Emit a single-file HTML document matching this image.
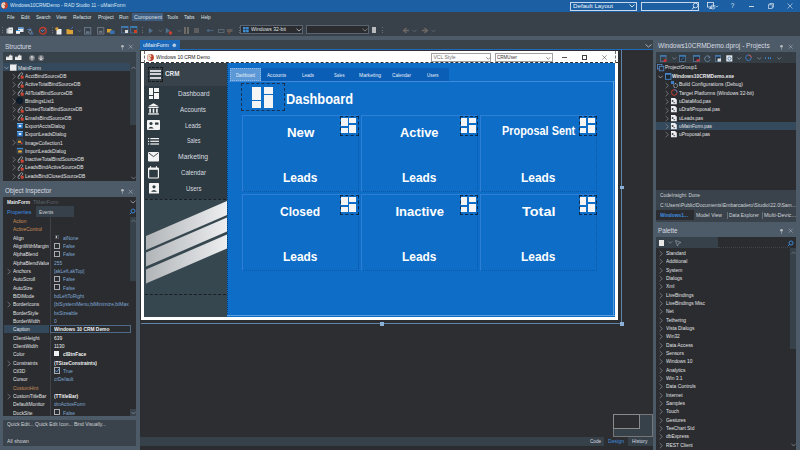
<!DOCTYPE html>
<html><head><meta charset="utf-8">
<style>
*{margin:0;padding:0;box-sizing:border-box}
html,body{width:800px;height:450px;overflow:hidden;background:#2b2c30;font-family:"Liberation Sans",sans-serif}
.a{position:absolute}
.t{position:absolute;white-space:nowrap;line-height:1}
svg{overflow:visible}
</style></head><body>
<div class="a" style="left:0px;top:0px;width:800px;height:11.6px;background:#1c5fa2;"></div>
<div class="a" style="left:0px;top:11.6px;width:800px;height:24.6px;background:#38414a;"></div>
<div class="a" style="left:0px;top:36px;width:800px;height:4px;background:#4d5a67;"></div>
<div class="a" style="left:0px;top:36px;width:140px;height:414px;background:#4d5a67;"></div>
<div class="a" style="left:3px;top:52px;width:133px;height:129px;background:#2b2c30;"></div>
<div class="a" style="left:3px;top:52px;width:133px;height:11px;background:#38424a;"></div>
<div class="a" style="left:3px;top:197px;width:133px;height:219px;background:#2b2c30;"></div>
<div class="a" style="left:3px;top:419.5px;width:133px;height:26.5px;background:#3a434c;"></div>
<div class="a" style="left:140px;top:40px;width:513px;height:9px;background:#3a424a;"></div>
<div class="a" style="left:140px;top:49px;width:513px;height:1px;background:#1e6bc0;"></div>
<div class="a" style="left:140px;top:50px;width:513px;height:387px;background:#2d2e32;"></div>
<div class="a" style="left:140px;top:436.6px;width:513px;height:9.3px;background:#37414a;"></div>
<div class="a" style="left:653px;top:36px;width:147px;height:414px;background:#4d5a67;"></div>
<div class="a" style="left:656px;top:52px;width:140px;height:138px;background:#2b2c30;"></div>
<div class="a" style="left:656px;top:190px;width:140px;height:32px;background:#3a434c;"></div>
<div class="a" style="left:656px;top:237px;width:140px;height:213px;background:#2b2c30;"></div>
<svg class="a" style="left:0.6px;top:1.5px" width="8" height="8"><circle cx="3.5" cy="3.5" r="3.4" fill="#c0402c"/><path d="M0.3 3.5 A3.2 3.2 0 0 1 3.5 0.3 L4.6 2.4 L3 3.4 L4.2 5 L2.6 6.6 A3.2 3.2 0 0 1 0.3 3.5Z" fill="#eadcd2"/><circle cx="2.6" cy="2.2" r="0.8" fill="#d8a050"/></svg>
<span class="t" style="left:9.50px;top:3.03px;font-size:5.4px;color:#dce8f4;transform:scaleX(0.912);transform-origin:0 0;">Windows10CRMDemo - RAD Studio 11 - uMainForm</span>
<div class="a" style="left:570px;top:1.5px;width:67px;height:9px;border:1px solid #c8d8ea;"></div>
<span class="t" style="left:573.00px;top:3.69px;font-size:5.8px;color:#eef3f8;transform:scaleX(1.070);transform-origin:0 0;">Default Layout</span>
<svg class="a" style="left:629px;top:3px" width="6" height="5"><path d="M0.5 1.5 L3 4 L5.5 1.5" stroke="#e8eef6" stroke-width="0.9" fill="none"/></svg>
<div class="a" style="left:641px;top:1.5px;width:58px;height:9px;border:1px solid #c8d8ea;"></div>
<svg class="a" style="left:691px;top:2px" width="8" height="8"><circle cx="4.5" cy="3.5" r="2.3" stroke="#e8eef6" stroke-width="0.8" fill="none"/><path d="M3 5 L1 7.5" stroke="#e8eef6" stroke-width="0.9"/></svg>
<svg class="a" style="left:707px;top:2px" width="12" height="9"><rect x="0.5" y="0.5" width="6" height="4.5" stroke="#e0e8f2" stroke-width="0.8" fill="none"/><path d="M2 6.5 H5 M3.5 5 V6.5" stroke="#e0e8f2" stroke-width="0.7"/><circle cx="6" cy="5" r="2" fill="none" stroke="#e0e8f2" stroke-width="0.7"/><path d="M8.8 3.8 l1.2 1.2 l1.2 -1.2" stroke="#e0e8f2" stroke-width="0.6" fill="none"/></svg>
<span class="t" style="left:730.72px;top:3.18px;font-size:6.4px;color:#dfe8f2;">?</span>
<div class="a" style="left:748.5px;top:5.6px;width:5px;height:0.6px;background:#c8d6e4;"></div>
<svg class="a" style="left:767.5px;top:3px" width="8" height="8"><rect x="0.5" y="1.8" width="3.7" height="3.7" stroke="#d8e2ee" stroke-width="0.7" fill="none"/><path d="M1.8 1.8 V0.5 H5.5 V4.2 H4.2" stroke="#d8e2ee" stroke-width="0.7" fill="none"/></svg>
<svg class="a" style="left:786.5px;top:3px" width="8" height="8"><path d="M0.5 0.5 L5.5 5.5 M5.5 0.5 L0.5 5.5" stroke="#d8e2ee" stroke-width="0.6"/></svg>
<div class="a" style="left:132px;top:13px;width:31px;height:8px;background:#3e5d80;"></div>
<span class="t" style="left:7.00px;top:15.46px;font-size:5.6px;color:#dfe3e8;transform:scaleX(0.832);transform-origin:0 0;">File</span>
<span class="t" style="left:20.50px;top:15.46px;font-size:5.6px;color:#dfe3e8;transform:scaleX(0.902);transform-origin:0 0;">Edit</span>
<span class="t" style="left:35.50px;top:15.46px;font-size:5.6px;color:#dfe3e8;transform:scaleX(0.818);transform-origin:0 0;">Search</span>
<span class="t" style="left:56.00px;top:15.46px;font-size:5.6px;color:#dfe3e8;transform:scaleX(0.889);transform-origin:0 0;">View</span>
<span class="t" style="left:73.00px;top:15.46px;font-size:5.6px;color:#dfe3e8;transform:scaleX(0.875);transform-origin:0 0;">Refactor</span>
<span class="t" style="left:97.50px;top:15.46px;font-size:5.6px;color:#dfe3e8;transform:scaleX(0.901);transform-origin:0 0;">Project</span>
<span class="t" style="left:118.75px;top:15.46px;font-size:5.6px;color:#dfe3e8;transform:scaleX(0.925);transform-origin:0 0;">Run</span>
<span class="t" style="left:134.00px;top:15.46px;font-size:5.6px;color:#dfe3e8;transform:scaleX(0.968);transform-origin:0 0;">Component</span>
<span class="t" style="left:167.00px;top:15.46px;font-size:5.6px;color:#dfe3e8;transform:scaleX(0.842);transform-origin:0 0;">Tools</span>
<span class="t" style="left:184.00px;top:15.46px;font-size:5.6px;color:#dfe3e8;transform:scaleX(0.888);transform-origin:0 0;">Tabs</span>
<span class="t" style="left:201.00px;top:15.46px;font-size:5.6px;color:#dfe3e8;transform:scaleX(0.847);transform-origin:0 0;">Help</span>
<div class="a" style="left:2px;top:27px;width:1px;height:1px;background:#6a7078;"></div>
<div class="a" style="left:2px;top:29.5px;width:1px;height:1px;background:#6a7078;"></div>
<div class="a" style="left:2px;top:32px;width:1px;height:1px;background:#6a7078;"></div>
<div class="a" style="left:51.5px;top:27px;width:1px;height:1px;background:#6a7078;"></div>
<div class="a" style="left:51.5px;top:29.5px;width:1px;height:1px;background:#6a7078;"></div>
<div class="a" style="left:51.5px;top:32px;width:1px;height:1px;background:#6a7078;"></div>
<div class="a" style="left:141.5px;top:27px;width:1px;height:1px;background:#6a7078;"></div>
<div class="a" style="left:141.5px;top:29.5px;width:1px;height:1px;background:#6a7078;"></div>
<div class="a" style="left:141.5px;top:32px;width:1px;height:1px;background:#6a7078;"></div>
<div class="a" style="left:238.5px;top:27px;width:1px;height:1px;background:#6a7078;"></div>
<div class="a" style="left:238.5px;top:29.5px;width:1px;height:1px;background:#6a7078;"></div>
<div class="a" style="left:238.5px;top:32px;width:1px;height:1px;background:#6a7078;"></div>
<div class="a" style="left:382px;top:27px;width:1px;height:1px;background:#6a7078;"></div>
<div class="a" style="left:382px;top:29.5px;width:1px;height:1px;background:#6a7078;"></div>
<div class="a" style="left:382px;top:32px;width:1px;height:1px;background:#6a7078;"></div>
<svg class="a" style="left:6px;top:26.5px" width="8" height="7"><rect x="0.5" y="1.5" width="4" height="5" fill="#b8bcc0"/><rect x="2.5" y="0.5" width="4.5" height="6" fill="#e8eaec"/><rect x="3.5" y="2" width="2.5" height="0.6" fill="#909498"/></svg>
<svg class="a" style="left:16px;top:26.5px" width="8" height="7"><rect x="2" y="0.5" width="5.5" height="4.5" fill="#e8eaec"/><rect x="2" y="0.5" width="5.5" height="1.3" fill="#3d8fd8"/><rect x="0" y="3" width="4" height="3.8" fill="#f4f4f4"/><rect x="0" y="3" width="4" height="1" fill="#3d8fd8"/></svg>
<svg class="a" style="left:26px;top:26.5px" width="8" height="8"><path d="M1 2.5 H5 M3.5 1 L5.2 2.5 L3.5 4" stroke="#4a80c0" stroke-width="0.9" fill="none"/><circle cx="4.2" cy="4.8" r="1.6" stroke="#8a9098" stroke-width="0.8" fill="none"/><path d="M6.8 5.5 V7 H4" stroke="#4a80c0" stroke-width="0.9" fill="none"/></svg>
<svg class="a" style="left:39px;top:26.5px" width="8" height="8"><circle cx="3.8" cy="3.8" r="3.3" fill="none" stroke="#c83a2a" stroke-width="1.3"/><path d="M2 3 L3.8 4.5 L5.6 2.5" stroke="#5a90c8" stroke-width="1" fill="none"/></svg>
<svg class="a" style="left:55px;top:26.5px" width="7" height="8"><rect x="1.5" y="2" width="5" height="5.5" fill="#eceef0"/><path d="M0 1 L3 0 L3.5 2.5 L1 3.5Z" fill="#e0a030"/></svg>
<svg class="a" style="left:66px;top:26.5px" width="8" height="8"><rect x="0.5" y="3" width="6.5" height="4.2" fill="#dca238"/><rect x="0.5" y="2.2" width="3" height="1.2" fill="#dca238"/><path d="M5 2 L7 0" stroke="#4a80c0" stroke-width="0.8"/></svg>
<svg class="a" style="left:84px;top:26.5px" width="8" height="8"><rect x="0.6" y="0.6" width="6.2" height="6.4" fill="none" stroke="#6a7a8a" stroke-width="1"/><rect x="2" y="4.3" width="3.4" height="1.8" fill="#6a7a8a"/></svg>
<svg class="a" style="left:97px;top:26.5px" width="8" height="8"><rect x="0.6" y="0.6" width="6.2" height="6.4" fill="none" stroke="#6a7480" stroke-width="1"/><rect x="2" y="3.8" width="3.4" height="2" fill="#707880"/></svg>
<svg class="a" style="left:107px;top:26.5px" width="8" height="8"><rect x="0" y="2" width="4.5" height="3.5" fill="#d8a030"/><rect x="3" y="3.5" width="4.5" height="3.5" fill="#3a70b0"/></svg>
<svg class="a" style="left:120.5px;top:26.3px" width="8" height="8"><rect x="0.5" y="0.5" width="6.5" height="6.5" fill="none" stroke="#4a6a90" stroke-width="0.9"/><rect x="0.5" y="0.5" width="6.5" height="1.2" fill="#3d8fd8"/><rect x="4" y="4" width="3" height="3" fill="#d8dce0"/></svg>
<svg class="a" style="left:130px;top:26.3px" width="8" height="8"><rect x="0.5" y="0.5" width="6.5" height="6.5" fill="none" stroke="#4a6a90" stroke-width="0.9"/><rect x="0.5" y="0.5" width="6.5" height="1.2" fill="#3d8fd8"/><rect x="4" y="4" width="3" height="3" fill="#d04020"/></svg>
<svg class="a" style="left:147.5px;top:26.5px" width="8" height="8"><path d="M0.8 0.8 L5 3.7 L0.8 6.6Z" fill="#50708e"/></svg>
<svg class="a" style="left:165px;top:26.5px" width="8" height="8"><path d="M0.8 0.8 L5 3.7 L0.8 6.6Z" fill="#50708e"/><path d="M3.5 6 L5.5 3.8 L7.5 6 L5.5 8Z" fill="#d04030"/></svg>
<svg class="a" style="left:157.5px;top:28.5px" width="5" height="4"><path d="M0.5 0.8 L2.5 2.8 L4.5 0.8" stroke="#6a7078" stroke-width="0.7" fill="none"/></svg>
<svg class="a" style="left:176.5px;top:28.5px" width="5" height="4"><path d="M0.5 0.8 L2.5 2.8 L4.5 0.8" stroke="#6a7078" stroke-width="0.7" fill="none"/></svg>
<svg class="a" style="left:77px;top:28.5px" width="5" height="4"><path d="M0.5 0.8 L2.5 2.8 L4.5 0.8" stroke="#6a7078" stroke-width="0.7" fill="none"/></svg>
<div class="a" style="left:184px;top:27px;width:1.8px;height:6.5px;background:#6e6a66;"></div>
<div class="a" style="left:187.2px;top:27px;width:1.8px;height:6.5px;background:#6e6a66;"></div>
<div class="a" style="left:194px;top:27.5px;width:5px;height:5.5px;background:#5e5e5e;"></div>
<svg class="a" style="left:207px;top:27.5px" width="7" height="6"><rect x="0" y="1.5" width="3" height="2" fill="#4a6a88"/><path d="M3.5 2.5 H6.5" stroke="#4a6a88" stroke-width="0.9"/></svg>
<svg class="a" style="left:217.5px;top:27.5px" width="7" height="6"><rect x="0.5" y="1.5" width="5.5" height="3" fill="none" stroke="#5a6a78" stroke-width="0.9"/></svg>
<svg class="a" style="left:227px;top:27.5px" width="7" height="6"><rect x="0" y="1" width="5.5" height="3" fill="#605a58"/><rect x="1" y="4.5" width="2" height="1" fill="#a05030"/></svg>
<div class="a" style="left:240px;top:25px;width:62.5px;height:9.25px;background:#2b2c30;border:1px solid #5a6470;"></div>
<svg class="a" style="left:243px;top:27px" width="6" height="6"><rect x="0" y="0" width="2.6" height="2.4" fill="#3f8fd8"/><rect x="3.1" y="0" width="2.6" height="2.4" fill="#3f8fd8"/><rect x="0" y="2.9" width="2.6" height="2.4" fill="#3f8fd8"/><rect x="3.1" y="2.9" width="2.6" height="2.4" fill="#3f8fd8"/></svg>
<span class="t" style="left:250.50px;top:26.86px;font-size:5.6px;color:#dfe3e8;transform:scaleX(0.915);transform-origin:0 0;">Windows 32-bit</span>
<svg class="a" style="left:295.5px;top:28px" width="6" height="4"><path d="M0.5 0.8 L3 3 L5.5 0.8" stroke="#c8ccd0" stroke-width="0.8" fill="none"/></svg>
<div class="a" style="left:306.25px;top:25px;width:62.5px;height:9.25px;background:#2b2c30;border:1px solid #5a6470;"></div>
<svg class="a" style="left:362px;top:28px" width="6" height="4"><path d="M0.5 0.8 L3 3 L5.5 0.8" stroke="#8a9098" stroke-width="0.8" fill="none"/></svg>
<div class="a" style="left:371.5px;top:27px;width:4.5px;height:6px;background:#d8d8d8;opacity:0.8"></div>
<svg class="a" style="left:402px;top:26.5px" width="8" height="7"><path d="M7 3.5 H2 M4.5 1 L1.5 3.5 L4.5 6" stroke="#6e6864" stroke-width="1.3" fill="none"/></svg>
<svg class="a" style="left:420.5px;top:26.5px" width="8" height="7"><path d="M1 3.5 H6 M3.5 1 L6.5 3.5 L3.5 6" stroke="#6e6864" stroke-width="1.3" fill="none"/></svg>
<svg class="a" style="left:411.5px;top:28.5px" width="5" height="4"><path d="M0.5 0.8 L2.5 2.8 L4.5 0.8" stroke="#6a7078" stroke-width="0.7" fill="none"/></svg>
<svg class="a" style="left:430.5px;top:28.5px" width="5" height="4"><path d="M0.5 0.8 L2.5 2.8 L4.5 0.8" stroke="#6a7078" stroke-width="0.7" fill="none"/></svg>
<span class="t" style="left:5.00px;top:43.84px;font-size:6.8px;color:#d8dde2;transform:scaleX(0.957);transform-origin:0 0;">Structure</span>
<svg class="a" style="left:119.5px;top:43.5px" width="5" height="7"><circle cx="2.5" cy="2.2" r="1.3" fill="#b8bcc0"/><path d="M2.5 3.3 V6" stroke="#b8bcc0" stroke-width="0.5"/></svg>
<svg class="a" style="left:127.5px;top:44px" width="6" height="6"><path d="M0.8 0.8 L4.6 4.6 M4.6 0.8 L0.8 4.6" stroke="#b8bcc0" stroke-width="0.55"/></svg>
<svg class="a" style="left:5.6px;top:54px" width="7" height="7"><path d="M0 3 H2.5 Q4.5 3 4.5 1 V0.5" stroke="#e0e0e0" stroke-width="0.7" fill="none"/><rect x="0" y="3.2" width="6.5" height="2.8" fill="#eeeeee"/><rect x="3" y="1.5" width="3.5" height="2" fill="#eeeeee"/></svg>
<svg class="a" style="left:15px;top:54px" width="7" height="7"><path d="M0 3 H2.5 Q4.5 3 4.5 1 V0.5" stroke="#e0e0e0" stroke-width="0.7" fill="none"/><rect x="0" y="3.2" width="6.5" height="2.8" fill="#eeeeee"/><rect x="3" y="1.5" width="3.5" height="2" fill="#eeeeee"/></svg>
<svg class="a" style="left:28.5px;top:54.5px" width="6" height="6"><circle cx="3" cy="3" r="3" fill="#767a80"/><path d="M3 1.3 V4.8 M1.6 2.7 L3 1.3 L4.4 2.7" stroke="#f0f0f0" stroke-width="0.9" fill="none"/></svg>
<svg class="a" style="left:38px;top:54.5px" width="6" height="6"><circle cx="3" cy="3" r="3" fill="#767a80"/><path d="M3 1.3 V4.8 M1.6 3.4 L3 4.8 L4.4 3.4" stroke="#f0f0f0" stroke-width="0.9" fill="none"/></svg>
<div class="a" style="left:3px;top:63px;width:126.5px;height:8.3px;background:#35495c;"></div>
<svg class="a" style="left:4px;top:65.5px" width="5" height="4"><path d="M0.5 0.8 L2.5 3 L4.5 0.8" stroke="#a8b0b8" stroke-width="0.7" fill="none"/></svg>
<svg class="a" style="left:10px;top:64px" width="7" height="7"><rect x="0" y="0" width="6.5" height="6.7" fill="#eceef0"/><rect x="0" y="0" width="6.5" height="1" fill="#9aa0a8"/></svg>
<span class="t" style="left:18.00px;top:65.56px;font-size:5.6px;color:#e0e2e4;transform:scaleX(0.913);transform-origin:0 0;">MainForm</span>
<svg class="a" style="left:11.5px;top:73.80px" width="5" height="6"><path d="M0.6 0 L3.4 2.6 L0.6 5.2" stroke="#8e9296" stroke-width="0.65" fill="none"/></svg>
<svg class="a" style="left:16.5px;top:72.39999999999999px" width="7" height="7"><path d="M1.2 4.2 L3.6 1.2 Q4.6 0.2 5.4 1 Q6.1 1.8 5.2 2.8 L3.8 4.4" stroke="#a8acb0" stroke-width="0.8" fill="none"/><path d="M3 2.6 L1.2 4.8 Q0.6 5.8 1.4 6.3 Q2.2 6.8 2.9 6" stroke="#a8acb0" stroke-width="0.8" fill="none"/><rect x="3.8" y="3.8" width="2.9" height="2.9" fill="#cc4430"/></svg>
<span class="t" style="left:25.00px;top:73.86px;font-size:5.6px;color:#e0e2e4;transform:scaleX(0.870);transform-origin:0 0;">AcctBindSourceDB</span>
<svg class="a" style="left:11.5px;top:82.13px" width="5" height="6"><path d="M0.6 0 L3.4 2.6 L0.6 5.2" stroke="#8e9296" stroke-width="0.65" fill="none"/></svg>
<svg class="a" style="left:16.5px;top:80.72999999999999px" width="7" height="7"><path d="M1.2 4.2 L3.6 1.2 Q4.6 0.2 5.4 1 Q6.1 1.8 5.2 2.8 L3.8 4.4" stroke="#a8acb0" stroke-width="0.8" fill="none"/><path d="M3 2.6 L1.2 4.8 Q0.6 5.8 1.4 6.3 Q2.2 6.8 2.9 6" stroke="#a8acb0" stroke-width="0.8" fill="none"/><rect x="3.8" y="3.8" width="2.9" height="2.9" fill="#cc4430"/></svg>
<span class="t" style="left:25.00px;top:82.19px;font-size:5.6px;color:#e0e2e4;transform:scaleX(0.870);transform-origin:0 0;">ActiveTotalBindSourceDB</span>
<svg class="a" style="left:11.5px;top:90.46px" width="5" height="6"><path d="M0.6 0 L3.4 2.6 L0.6 5.2" stroke="#8e9296" stroke-width="0.65" fill="none"/></svg>
<svg class="a" style="left:16.5px;top:89.05999999999999px" width="7" height="7"><path d="M1.2 4.2 L3.6 1.2 Q4.6 0.2 5.4 1 Q6.1 1.8 5.2 2.8 L3.8 4.4" stroke="#a8acb0" stroke-width="0.8" fill="none"/><path d="M3 2.6 L1.2 4.8 Q0.6 5.8 1.4 6.3 Q2.2 6.8 2.9 6" stroke="#a8acb0" stroke-width="0.8" fill="none"/><rect x="3.8" y="3.8" width="2.9" height="2.9" fill="#cc4430"/></svg>
<span class="t" style="left:25.00px;top:90.52px;font-size:5.6px;color:#e0e2e4;transform:scaleX(0.870);transform-origin:0 0;">AllTotalBindSourceDB</span>
<svg class="a" style="left:11.5px;top:98.79px" width="5" height="6"><path d="M0.6 0 L3.4 2.6 L0.6 5.2" stroke="#8e9296" stroke-width="0.65" fill="none"/></svg>
<div class="a" style="left:16px;top:96.99000000000001px;width:7.2px;height:7.2px;background:#0d1b2a;border-radius:50%;"></div>
<span class="t" style="left:25.00px;top:98.85px;font-size:5.6px;color:#e0e2e4;transform:scaleX(0.870);transform-origin:0 0;">BindingsList1</span>
<svg class="a" style="left:11.5px;top:107.12px" width="5" height="6"><path d="M0.6 0 L3.4 2.6 L0.6 5.2" stroke="#8e9296" stroke-width="0.65" fill="none"/></svg>
<svg class="a" style="left:16.5px;top:105.71999999999998px" width="7" height="7"><path d="M1.2 4.2 L3.6 1.2 Q4.6 0.2 5.4 1 Q6.1 1.8 5.2 2.8 L3.8 4.4" stroke="#a8acb0" stroke-width="0.8" fill="none"/><path d="M3 2.6 L1.2 4.8 Q0.6 5.8 1.4 6.3 Q2.2 6.8 2.9 6" stroke="#a8acb0" stroke-width="0.8" fill="none"/><rect x="3.8" y="3.8" width="2.9" height="2.9" fill="#cc4430"/></svg>
<span class="t" style="left:25.00px;top:107.18px;font-size:5.6px;color:#e0e2e4;transform:scaleX(0.870);transform-origin:0 0;">ClosedTotalBindSourceDB</span>
<svg class="a" style="left:11.5px;top:115.45px" width="5" height="6"><path d="M0.6 0 L3.4 2.6 L0.6 5.2" stroke="#8e9296" stroke-width="0.65" fill="none"/></svg>
<svg class="a" style="left:16.5px;top:114.05px" width="7" height="7"><path d="M1.2 4.2 L3.6 1.2 Q4.6 0.2 5.4 1 Q6.1 1.8 5.2 2.8 L3.8 4.4" stroke="#a8acb0" stroke-width="0.8" fill="none"/><path d="M3 2.6 L1.2 4.8 Q0.6 5.8 1.4 6.3 Q2.2 6.8 2.9 6" stroke="#a8acb0" stroke-width="0.8" fill="none"/><rect x="3.8" y="3.8" width="2.9" height="2.9" fill="#cc4430"/></svg>
<span class="t" style="left:25.00px;top:115.51px;font-size:5.6px;color:#e0e2e4;transform:scaleX(0.870);transform-origin:0 0;">EmailsBindSourceDB</span>
<svg class="a" style="left:17px;top:122.67999999999999px" width="6" height="6"><rect x="0" y="0" width="6" height="5.6" fill="#2f78c8" stroke="#203850" stroke-width="0.4"/><rect x="0" y="0" width="6" height="1" fill="#7ab4ec"/><ellipse cx="3" cy="3" rx="1.5" ry="1" fill="#f4f8fc"/></svg>
<span class="t" style="left:25.00px;top:123.84px;font-size:5.6px;color:#e0e2e4;transform:scaleX(0.870);transform-origin:0 0;">ExportAcctsDialog</span>
<svg class="a" style="left:17px;top:131.01px" width="6" height="6"><rect x="0" y="0" width="6" height="5.6" fill="#2f78c8" stroke="#203850" stroke-width="0.4"/><rect x="0" y="0" width="6" height="1" fill="#7ab4ec"/><ellipse cx="3" cy="3" rx="1.5" ry="1" fill="#f4f8fc"/></svg>
<span class="t" style="left:25.00px;top:132.17px;font-size:5.6px;color:#e0e2e4;transform:scaleX(0.870);transform-origin:0 0;">ExportLeadsDialog</span>
<svg class="a" style="left:11.5px;top:140.44px" width="5" height="6"><path d="M0.6 0 L3.4 2.6 L0.6 5.2" stroke="#8e9296" stroke-width="0.65" fill="none"/></svg>
<svg class="a" style="left:17px;top:139.44px" width="6" height="6"><rect x="0" y="0" width="6" height="5.5" fill="#2a3440" stroke="#4a5868" stroke-width="0.5"/><rect x="1" y="1.8" width="3" height="2" fill="#e0a030"/><circle cx="4.6" cy="4.2" r="0.9" fill="#d03a2a"/></svg>
<span class="t" style="left:25.00px;top:140.50px;font-size:5.6px;color:#e0e2e4;transform:scaleX(0.870);transform-origin:0 0;">ImageCollection1</span>
<svg class="a" style="left:17px;top:147.76999999999998px" width="6" height="6"><rect x="0" y="0" width="6" height="5.5" fill="#2a3440" stroke="#4a5868" stroke-width="0.5"/><rect x="0" y="0" width="6" height="1.2" fill="#3a8ad8"/><rect x="1.2" y="2.4" width="3.6" height="2.2" fill="#e8a838"/></svg>
<span class="t" style="left:25.00px;top:148.83px;font-size:5.6px;color:#e0e2e4;transform:scaleX(0.870);transform-origin:0 0;">ImportLeadsDialog</span>
<svg class="a" style="left:11.5px;top:157.10px" width="5" height="6"><path d="M0.6 0 L3.4 2.6 L0.6 5.2" stroke="#8e9296" stroke-width="0.65" fill="none"/></svg>
<svg class="a" style="left:16.5px;top:155.7px" width="7" height="7"><path d="M1.2 4.2 L3.6 1.2 Q4.6 0.2 5.4 1 Q6.1 1.8 5.2 2.8 L3.8 4.4" stroke="#a8acb0" stroke-width="0.8" fill="none"/><path d="M3 2.6 L1.2 4.8 Q0.6 5.8 1.4 6.3 Q2.2 6.8 2.9 6" stroke="#a8acb0" stroke-width="0.8" fill="none"/><rect x="3.8" y="3.8" width="2.9" height="2.9" fill="#cc4430"/></svg>
<span class="t" style="left:25.00px;top:157.16px;font-size:5.6px;color:#e0e2e4;transform:scaleX(0.870);transform-origin:0 0;">InactiveTotalBindSourceDB</span>
<svg class="a" style="left:11.5px;top:165.43px" width="5" height="6"><path d="M0.6 0 L3.4 2.6 L0.6 5.2" stroke="#8e9296" stroke-width="0.65" fill="none"/></svg>
<svg class="a" style="left:16.5px;top:164.03px" width="7" height="7"><path d="M1.2 4.2 L3.6 1.2 Q4.6 0.2 5.4 1 Q6.1 1.8 5.2 2.8 L3.8 4.4" stroke="#a8acb0" stroke-width="0.8" fill="none"/><path d="M3 2.6 L1.2 4.8 Q0.6 5.8 1.4 6.3 Q2.2 6.8 2.9 6" stroke="#a8acb0" stroke-width="0.8" fill="none"/><rect x="3.8" y="3.8" width="2.9" height="2.9" fill="#cc4430"/></svg>
<span class="t" style="left:25.00px;top:165.49px;font-size:5.6px;color:#e0e2e4;transform:scaleX(0.870);transform-origin:0 0;">LeadsBindActiveSourceDB</span>
<svg class="a" style="left:11.5px;top:173.76px" width="5" height="6"><path d="M0.6 0 L3.4 2.6 L0.6 5.2" stroke="#8e9296" stroke-width="0.65" fill="none"/></svg>
<svg class="a" style="left:16.5px;top:172.36px" width="7" height="7"><path d="M1.2 4.2 L3.6 1.2 Q4.6 0.2 5.4 1 Q6.1 1.8 5.2 2.8 L3.8 4.4" stroke="#a8acb0" stroke-width="0.8" fill="none"/><path d="M3 2.6 L1.2 4.8 Q0.6 5.8 1.4 6.3 Q2.2 6.8 2.9 6" stroke="#a8acb0" stroke-width="0.8" fill="none"/><rect x="3.8" y="3.8" width="2.9" height="2.9" fill="#cc4430"/></svg>
<span class="t" style="left:25.00px;top:173.82px;font-size:5.6px;color:#e0e2e4;transform:scaleX(0.870);transform-origin:0 0;">LeadsBindClosedSourceDB</span>
<div class="a" style="left:129.5px;top:63px;width:6.5px;height:61.5px;background:#37414a;"></div>
<svg class="a" style="left:131px;top:65.5px" width="5" height="4"><path d="M0.5 3 L2.5 0.8 L4.5 3" stroke="#8890a0" stroke-width="0.7" fill="none"/></svg>
<svg class="a" style="left:131px;top:176px" width="5" height="4"><path d="M0.5 0.8 L2.5 3 L4.5 0.8" stroke="#8890a0" stroke-width="0.7" fill="none"/></svg>
<span class="t" style="left:5.00px;top:188.44px;font-size:6.8px;color:#d8dde2;transform:scaleX(0.939);transform-origin:0 0;">Object Inspector</span>
<svg class="a" style="left:119.5px;top:188px" width="5" height="7"><circle cx="2.5" cy="2.2" r="1.3" fill="#b8bcc0"/><path d="M2.5 3.3 V6" stroke="#b8bcc0" stroke-width="0.5"/></svg>
<svg class="a" style="left:127.5px;top:188.5px" width="6" height="6"><path d="M0.8 0.8 L4.6 4.6 M4.6 0.8 L0.8 4.6" stroke="#b8bcc0" stroke-width="0.55"/></svg>
<span class="t" style="left:7.00px;top:199.86px;font-size:5.6px;color:#e8eaec;font-weight:bold;transform:scaleX(0.860);transform-origin:0 0;">MainForm</span>
<span class="t" style="left:32.50px;top:199.86px;font-size:5.6px;color:#5e646c;transform:scaleX(0.892);transform-origin:0 0;">TMainForm</span>
<svg class="a" style="left:129.5px;top:200px" width="6" height="4"><path d="M0.5 0.8 L3 3 L5.5 0.8" stroke="#a8b0b8" stroke-width="0.8" fill="none"/></svg>
<div class="a" style="left:3px;top:206.25px;width:133px;height:10.25px;background:#2b2c30;"></div>
<div class="a" style="left:36px;top:206.25px;width:38px;height:10.25px;background:#37414b;"></div>
<span class="t" style="left:7.00px;top:209.86px;font-size:5.6px;color:#3d8ee0;transform:scaleX(0.961);transform-origin:0 0;">Properties</span>
<span class="t" style="left:39.00px;top:209.86px;font-size:5.6px;color:#d0d4d8;transform:scaleX(0.847);transform-origin:0 0;">Events</span>
<svg class="a" style="left:128.5px;top:208px" width="7" height="7"><circle cx="4" cy="3" r="2" stroke="#3d8ee0" stroke-width="0.9" fill="none"/><path d="M2.6 4.4 L0.8 6.2" stroke="#3d8ee0" stroke-width="1"/></svg>
<span class="t" style="left:13.10px;top:218.91px;font-size:5.6px;color:#c98e58;transform:scaleX(0.870);transform-origin:0 0;">Action</span>
<span class="t" style="left:13.10px;top:227.24px;font-size:5.6px;color:#c98e58;transform:scaleX(0.870);transform-origin:0 0;">ActiveControl</span>
<span class="t" style="left:13.10px;top:235.57px;font-size:5.6px;color:#e0e2e4;transform:scaleX(0.870);transform-origin:0 0;">Align</span>
<span class="t" style="left:13.10px;top:243.90px;font-size:5.6px;color:#e0e2e4;transform:scaleX(0.870);transform-origin:0 0;">AlignWithMargins</span>
<span class="t" style="left:13.10px;top:252.23px;font-size:5.6px;color:#e0e2e4;transform:scaleX(0.870);transform-origin:0 0;">AlphaBlend</span>
<span class="t" style="left:13.10px;top:260.56px;font-size:5.6px;color:#e0e2e4;transform:scaleX(0.870);transform-origin:0 0;">AlphaBlendValue</span>
<svg class="a" style="left:6.5px;top:268.93px" width="5" height="6"><path d="M0.6 0 L3.4 2.6 L0.6 5.2" stroke="#8e9296" stroke-width="0.65" fill="none"/></svg>
<span class="t" style="left:13.10px;top:268.89px;font-size:5.6px;color:#e0e2e4;transform:scaleX(0.870);transform-origin:0 0;">Anchors</span>
<span class="t" style="left:13.10px;top:277.22px;font-size:5.6px;color:#e0e2e4;transform:scaleX(0.870);transform-origin:0 0;">AutoScroll</span>
<span class="t" style="left:13.10px;top:285.55px;font-size:5.6px;color:#e0e2e4;transform:scaleX(0.870);transform-origin:0 0;">AutoSize</span>
<span class="t" style="left:13.10px;top:293.88px;font-size:5.6px;color:#e0e2e4;transform:scaleX(0.870);transform-origin:0 0;">BiDiMode</span>
<svg class="a" style="left:6.5px;top:302.25px" width="5" height="6"><path d="M0.6 0 L3.4 2.6 L0.6 5.2" stroke="#8e9296" stroke-width="0.65" fill="none"/></svg>
<span class="t" style="left:13.10px;top:302.21px;font-size:5.6px;color:#e0e2e4;transform:scaleX(0.870);transform-origin:0 0;">BorderIcons</span>
<span class="t" style="left:13.10px;top:310.54px;font-size:5.6px;color:#e0e2e4;transform:scaleX(0.870);transform-origin:0 0;">BorderStyle</span>
<span class="t" style="left:13.10px;top:318.87px;font-size:5.6px;color:#e0e2e4;transform:scaleX(0.870);transform-origin:0 0;">BorderWidth</span>
<div class="a" style="left:3.5px;top:324.84000000000003px;width:46px;height:8.4px;background:#35495c;"></div>
<span class="t" style="left:13.10px;top:327.20px;font-size:5.6px;color:#e0e2e4;transform:scaleX(0.870);transform-origin:0 0;">Caption</span>
<span class="t" style="left:13.10px;top:335.53px;font-size:5.6px;color:#e0e2e4;transform:scaleX(0.870);transform-origin:0 0;">ClientHeight</span>
<span class="t" style="left:13.10px;top:343.86px;font-size:5.6px;color:#e0e2e4;transform:scaleX(0.870);transform-origin:0 0;">ClientWidth</span>
<span class="t" style="left:13.10px;top:352.19px;font-size:5.6px;color:#e0e2e4;transform:scaleX(0.870);transform-origin:0 0;">Color</span>
<svg class="a" style="left:6.5px;top:360.56px" width="5" height="6"><path d="M0.6 0 L3.4 2.6 L0.6 5.2" stroke="#8e9296" stroke-width="0.65" fill="none"/></svg>
<span class="t" style="left:13.10px;top:360.52px;font-size:5.6px;color:#e0e2e4;transform:scaleX(0.870);transform-origin:0 0;">Constraints</span>
<span class="t" style="left:13.10px;top:368.85px;font-size:5.6px;color:#e0e2e4;transform:scaleX(0.870);transform-origin:0 0;">Ctl3D</span>
<span class="t" style="left:13.10px;top:377.18px;font-size:5.6px;color:#e0e2e4;transform:scaleX(0.870);transform-origin:0 0;">Cursor</span>
<span class="t" style="left:13.10px;top:385.51px;font-size:5.6px;color:#c98e58;transform:scaleX(0.870);transform-origin:0 0;">CustomHint</span>
<svg class="a" style="left:6.5px;top:393.88px" width="5" height="6"><path d="M0.6 0 L3.4 2.6 L0.6 5.2" stroke="#8e9296" stroke-width="0.65" fill="none"/></svg>
<span class="t" style="left:13.10px;top:393.84px;font-size:5.6px;color:#e0e2e4;transform:scaleX(0.870);transform-origin:0 0;">CustomTitleBar</span>
<span class="t" style="left:13.10px;top:402.17px;font-size:5.6px;color:#e0e2e4;transform:scaleX(0.870);transform-origin:0 0;">DefaultMonitor</span>
<span class="t" style="left:13.10px;top:410.50px;font-size:5.6px;color:#e0e2e4;transform:scaleX(0.870);transform-origin:0 0;">DockSite</span>
<div class="a" style="left:49px;top:216.5px;width:5px;height:199.5px;background:#2b2c30;"></div>
<div class="a" style="left:49.5px;top:216.5px;width:0.8px;height:199.5px;background:#3e4246;"></div>
<div class="a" style="left:54.5px;top:234.91px;width:4px;height:4px;border:0.5px solid #505458;"></div>
<div class="a" style="left:55.8px;top:236.21px;width:1.5px;height:1.5px;background:#c8ccd0;"></div>
<span class="t" style="left:62.50px;top:235.57px;font-size:5.6px;color:#7fa8d4;transform:scaleX(0.870);transform-origin:0 0;">alNone</span>
<div class="a" style="left:54.2px;top:242.54000000000002px;width:6.3px;height:6.3px;border:0.8px solid #a8acb0;"></div>
<span class="t" style="left:62.50px;top:243.90px;font-size:5.6px;color:#7fa8d4;transform:scaleX(0.870);transform-origin:0 0;">False</span>
<div class="a" style="left:54.2px;top:250.87px;width:6.3px;height:6.3px;border:0.8px solid #a8acb0;"></div>
<span class="t" style="left:62.50px;top:252.23px;font-size:5.6px;color:#7fa8d4;transform:scaleX(0.870);transform-origin:0 0;">False</span>
<span class="t" style="left:54.20px;top:260.56px;font-size:5.6px;color:#7fa8d4;transform:scaleX(0.870);transform-origin:0 0;">255</span>
<span class="t" style="left:54.20px;top:268.89px;font-size:5.6px;color:#7fa8d4;transform:scaleX(0.870);transform-origin:0 0;">[akLeft,akTop]</span>
<div class="a" style="left:54.2px;top:275.86px;width:6.3px;height:6.3px;border:0.8px solid #a8acb0;"></div>
<span class="t" style="left:62.50px;top:277.22px;font-size:5.6px;color:#7fa8d4;transform:scaleX(0.870);transform-origin:0 0;">False</span>
<div class="a" style="left:54.2px;top:284.19px;width:6.3px;height:6.3px;border:0.8px solid #a8acb0;"></div>
<span class="t" style="left:62.50px;top:285.55px;font-size:5.6px;color:#7fa8d4;transform:scaleX(0.870);transform-origin:0 0;">False</span>
<span class="t" style="left:54.20px;top:293.88px;font-size:5.6px;color:#7fa8d4;transform:scaleX(0.870);transform-origin:0 0;">bdLeftToRight</span>
<span class="t" style="left:54.20px;top:302.21px;font-size:5.6px;color:#7fa8d4;transform:scaleX(0.901);transform-origin:0 0;">[biSystemMenu,biMinimize,biMax</span>
<span class="t" style="left:54.20px;top:310.54px;font-size:5.6px;color:#7fa8d4;transform:scaleX(0.870);transform-origin:0 0;">bsSizeable</span>
<span class="t" style="left:54.20px;top:318.87px;font-size:5.6px;color:#7fa8d4;transform:scaleX(0.870);transform-origin:0 0;">0</span>
<div class="a" style="left:50px;top:324.84000000000003px;width:80.5px;height:8.4px;background:#2b2c30;border:0.8px solid #4f6a86;"></div>
<span class="t" style="left:54.20px;top:327.20px;font-size:5.6px;color:#eef0f2;font-weight:bold;transform:scaleX(0.870);transform-origin:0 0;">Windows 10 CRM Demo</span>
<span class="t" style="left:54.20px;top:335.53px;font-size:5.6px;color:#eef0f2;transform:scaleX(0.870);transform-origin:0 0;">639</span>
<span class="t" style="left:54.20px;top:343.86px;font-size:5.6px;color:#eef0f2;transform:scaleX(0.870);transform-origin:0 0;">1130</span>
<div class="a" style="left:54.2px;top:351.22999999999996px;width:5px;height:5px;background:#f0f0f0;"></div>
<span class="t" style="left:62.50px;top:352.19px;font-size:5.6px;color:#eef0f2;font-weight:bold;transform:scaleX(0.870);transform-origin:0 0;">clBtnFace</span>
<span class="t" style="left:54.20px;top:360.52px;font-size:5.6px;color:#eef0f2;font-weight:bold;transform:scaleX(0.870);transform-origin:0 0;">(TSizeConstraints)</span>
<div class="a" style="left:54.2px;top:367.49px;width:6.3px;height:6.3px;border:0.8px solid #a8acb0;"></div>
<svg class="a" style="left:54.2px;top:367.49px" width="7" height="7"><path d="M1 3.2 L2.6 5 L5.8 1" stroke="#5aa0e8" stroke-width="0.9" fill="none"/></svg>
<span class="t" style="left:62.50px;top:368.85px;font-size:5.6px;color:#7fa8d4;transform:scaleX(0.870);transform-origin:0 0;">True</span>
<span class="t" style="left:54.20px;top:377.18px;font-size:5.6px;color:#7fa8d4;transform:scaleX(0.870);transform-origin:0 0;">crDefault</span>
<span class="t" style="left:54.20px;top:393.84px;font-size:5.6px;color:#eef0f2;font-weight:bold;transform:scaleX(0.870);transform-origin:0 0;">(TTitleBar)</span>
<span class="t" style="left:54.20px;top:402.17px;font-size:5.6px;color:#7fa8d4;transform:scaleX(0.870);transform-origin:0 0;">dmActiveForm</span>
<div class="a" style="left:54.2px;top:409.14000000000004px;width:6.3px;height:6.3px;border:0.8px solid #a8acb0;"></div>
<span class="t" style="left:62.50px;top:410.50px;font-size:5.6px;color:#7fa8d4;transform:scaleX(0.870);transform-origin:0 0;">False</span>
<div class="a" style="left:129.8px;top:217.3px;width:6.7px;height:63.3px;background:#37414a;"></div>
<svg class="a" style="left:131px;top:218.5px" width="5" height="4"><path d="M0.5 3 L2.5 0.8 L4.5 3" stroke="#7a8088" stroke-width="0.7" fill="none"/></svg>
<div class="a" style="left:130px;top:409px;width:6px;height:7px;background:#3a434c;"></div>
<svg class="a" style="left:131px;top:411px" width="5" height="4"><path d="M0.5 0.8 L2.5 3 L4.5 0.8" stroke="#8890a0" stroke-width="0.7" fill="none"/></svg>
<span class="t" style="left:6.50px;top:421.76px;font-size:5.6px;color:#d0d4d8;transform:scaleX(0.886);transform-origin:0 0;">Quick Edit...   Quick Edit Icon...   Bind Visually...</span>
<span class="t" style="left:6.50px;top:439.26px;font-size:5.6px;color:#d0d4d8;transform:scaleX(0.918);transform-origin:0 0;">All shown</span>
<div class="a" style="left:140px;top:40px;width:39.75px;height:8.75px;background:#1c68b8;"></div>
<span class="t" style="left:143.20px;top:41.92px;font-size:6px;color:#f2f6fa;transform:scaleX(0.847);transform-origin:0 0;">uMainForm</span>
<svg class="a" style="left:172.2px;top:42.5px" width="5" height="5"><circle cx="2.3" cy="2.3" r="1.5" fill="#a8c4e0" stroke="#dce8f4" stroke-width="0.5"/></svg>
<svg class="a" style="left:645px;top:43.5px" width="7" height="4"><path d="M0.5 0.5 L3.5 3 L6.5 0.5" stroke="#c8ccd0" stroke-width="0.8" fill="none"/></svg>
<div class="a" style="left:621px;top:50px;width:1px;height:273.5px;background:#5f84aa;"></div>
<div class="a" style="left:141px;top:323px;width:481px;height:1px;background:#5f84aa;"></div>
<div class="a" style="left:620px;top:321.5px;width:4px;height:4px;background:#8ab0d8;"></div>
<div class="a" style="left:379.75px;top:322px;width:3.75px;height:4px;background:#8ab0d8;"></div>
<div class="a" style="left:620px;top:185.7px;width:3.5px;height:3.5px;background:#8ab0d8;"></div>
<div class="a" style="left:141.25px;top:50.5px;width:476.75px;height:269.5px;background:#ffffff;"></div>
<div class="a" style="left:141px;top:50.2px;width:477px;height:0;border-top:1px dashed #303030"></div>
<div class="a" style="left:141px;top:62.3px;width:477px;height:0;border-top:1px dashed #303030"></div>
<div class="a" style="left:144.3px;top:50.5px;width:0;height:12.5px;border-left:0.6px dashed #707070"></div>
<div class="a" style="left:614.5px;top:50.5px;width:0;height:12.5px;border-left:0.6px dashed #707070"></div>
<svg class="a" style="left:147px;top:53.5px" width="8" height="8"><circle cx="3.5" cy="3.5" r="3.4" fill="#c0402c"/><path d="M0.3 3.5 A3.2 3.2 0 0 1 3.5 0.3 L4.6 2.4 L3 3.4 L4.2 5 L2.6 6.6 A3.2 3.2 0 0 1 0.3 3.5Z" fill="#eadcd2"/><circle cx="2.6" cy="2.2" r="0.8" fill="#d8a050"/></svg>
<span class="t" style="left:156.00px;top:54.56px;font-size:5.6px;color:#1a1a1a;transform:scaleX(0.882);transform-origin:0 0;">Windows 10 CRM Demo</span>
<div class="a" style="left:431.25px;top:53.25px;width:60px;height:8.75px;background:#fff;border:0.8px solid #a0a0a0;"></div>
<span class="t" style="left:433.50px;top:55.27px;font-size:5px;color:#707070;">VCL Style</span>
<svg class="a" style="left:485.5px;top:56.5px" width="5" height="3"><path d="M0.3 0.3 L2.3 2.3 L4.3 0.3" stroke="#606060" stroke-width="0.7" fill="none"/></svg>
<div class="a" style="left:495px;top:53.25px;width:57.5px;height:8.75px;background:#fff;border:0.8px solid #a0a0a0;"></div>
<span class="t" style="left:496.50px;top:55.27px;font-size:5px;color:#303030;transform:scaleX(0.911);transform-origin:0 0;">CRMUser</span>
<svg class="a" style="left:545.5px;top:56.5px" width="5" height="3"><path d="M0.3 0.3 L2.3 2.3 L4.3 0.3" stroke="#606060" stroke-width="0.7" fill="none"/></svg>
<div class="a" style="left:561.5px;top:56.9px;width:5.5px;height:0.7px;background:#505050;"></div>
<div class="a" style="left:581.7px;top:55px;width:5.6px;height:4.5px;border:0.8px solid #404040;"></div>
<svg class="a" style="left:602px;top:54.5px" width="5" height="5"><path d="M0.3 0.3 L4.6 4.6 M4.6 0.3 L0.3 4.6" stroke="#505050" stroke-width="0.6"/></svg>
<div class="a" style="left:144px;top:63px;width:83px;height:254px;background:#2e3a41;"></div>
<div class="a" style="left:144px;top:63px;width:83px;height:22.5px;background:#37424a;"></div>
<div class="a" style="left:148px;top:67px;width:14.5px;height:14.5px;border:0.8px dashed #1a1a1a;"></div>
<div class="a" style="left:150px;top:69.5px;width:10.5px;height:2px;background:#d0d4d8;"></div>
<div class="a" style="left:150px;top:73px;width:10.5px;height:2px;background:#d0d4d8;"></div>
<div class="a" style="left:150px;top:76.5px;width:10.5px;height:2px;background:#d0d4d8;"></div>
<span class="t" style="left:165.00px;top:70.37px;font-size:7px;color:#e8ecf0;font-weight:bold;transform:scaleX(0.909);transform-origin:0 0;">CRM</span>
<span class="t" style="left:177.50px;top:90.51px;font-size:6.6px;color:#d8dce0;transform:scaleX(0.976);transform-origin:0 0;">Dashboard</span>
<span class="t" style="left:180.00px;top:106.61px;font-size:6.6px;color:#d8dce0;transform:scaleX(0.959);transform-origin:0 0;">Accounts</span>
<span class="t" style="left:185.00px;top:122.51px;font-size:6.6px;color:#d8dce0;transform:scaleX(0.890);transform-origin:0 0;">Leads</span>
<span class="t" style="left:186.50px;top:138.21px;font-size:6.6px;color:#d8dce0;transform:scaleX(0.818);transform-origin:0 0;">Sales</span>
<span class="t" style="left:178.00px;top:154.01px;font-size:6.6px;color:#d8dce0;transform:scaleX(1.036);transform-origin:0 0;">Marketing</span>
<span class="t" style="left:181.00px;top:169.51px;font-size:6.6px;color:#d8dce0;transform:scaleX(0.934);transform-origin:0 0;">Calendar</span>
<span class="t" style="left:185.50px;top:185.51px;font-size:6.6px;color:#d8dce0;transform:scaleX(0.900);transform-origin:0 0;">Users</span>
<div class="a" style="left:148.5px;top:88px;width:4.8px;height:6.5px;background:#f4f4f4;"></div>
<div class="a" style="left:154.3px;top:88px;width:4.7px;height:4.2px;background:#f4f4f4;"></div>
<div class="a" style="left:148.5px;top:95.5px;width:4.8px;height:3px;background:#f4f4f4;"></div>
<div class="a" style="left:154.3px;top:93.2px;width:4.7px;height:5.6px;background:#f4f4f4;"></div>
<svg class="a" style="left:148px;top:103px" width="11" height="12"><path d="M5.5 0.3 L10.8 3.2 H0.2Z" fill="#f4f4f4"/><rect x="0.5" y="3.8" width="10" height="1.2" fill="#f4f4f4"/><rect x="1.3" y="5.6" width="1.6" height="4.2" fill="#f4f4f4"/><rect x="4.7" y="5.6" width="1.6" height="4.2" fill="#f4f4f4"/><rect x="8.1" y="5.6" width="1.6" height="4.2" fill="#f4f4f4"/><rect x="0.2" y="10.3" width="10.6" height="1.3" fill="#f4f4f4"/></svg>
<svg class="a" style="left:147px;top:120px" width="13" height="10"><rect x="0" y="0" width="13" height="10" rx="1" fill="#f4f4f4"/><circle cx="4" cy="3.5" r="1.6" fill="#2e3a41"/><path d="M1.3 8.5 Q4 5 6.8 8.5Z" fill="#2e3a41"/><rect x="8" y="2.5" width="3.5" height="2.2" fill="#2e3a41"/></svg>
<svg class="a" style="left:148px;top:137.5px" width="11" height="7"><rect x="0" y="0" width="1.2" height="1.2" fill="#f4f4f4"/><rect x="0" y="2.7" width="1.2" height="1.2" fill="#f4f4f4"/><rect x="0" y="5.4" width="1.2" height="1.2" fill="#f4f4f4"/><rect x="2.3" y="0" width="8.7" height="1.2" fill="#f4f4f4"/><rect x="2.3" y="2.7" width="8.7" height="1.2" fill="#f4f4f4"/><rect x="2.3" y="5.4" width="8.7" height="1.2" fill="#f4f4f4"/></svg>
<svg class="a" style="left:148px;top:152px" width="11" height="10"><rect x="0" y="0" width="11" height="9.5" rx="0.8" fill="#f4f4f4"/><path d="M0.8 1 L5.5 4.6 L10.2 1" stroke="#2e3a41" stroke-width="0.9" fill="none"/></svg>
<svg class="a" style="left:148px;top:166px" width="11" height="13"><rect x="0.6" y="2" width="9.8" height="10" rx="0.8" stroke="#f4f4f4" stroke-width="1.2" fill="none"/><rect x="0.6" y="2" width="9.8" height="1.8" fill="#f4f4f4"/><rect x="2" y="0.2" width="1.1" height="2.5" fill="#f4f4f4"/><rect x="7.9" y="0.2" width="1.1" height="2.5" fill="#f4f4f4"/></svg>
<svg class="a" style="left:148.5px;top:183px" width="10" height="11"><rect x="0" y="0" width="10" height="10.5" rx="0.6" fill="#f4f4f4"/><circle cx="5" cy="3.8" r="1.6" fill="#2e3a41"/><path d="M2 8.8 Q5 5.3 8 8.8Z" fill="#2e3a41"/></svg>
<div class="a" style="left:144px;top:199px;width:83px;height:118px;background:#37474f;"></div>
<div class="a" style="left:145px;top:198.5px;width:81px;height:0;border-top:0.8px dashed #1a1f24"></div>
<svg class="a" style="left:144px;top:199px" width="83" height="117"><defs><linearGradient id="sg" x1="0" y1="0" x2="1" y2="0"><stop offset="0" stop-color="#b2b5b8"/><stop offset="1" stop-color="#eceef0"/></linearGradient></defs>
<path d="M2 37 L83 2 L83 16 L2 51Z" fill="url(#sg)"/>
<path d="M2 53.5 L83 18.5 L83 32.5 L2 67.5Z" fill="url(#sg)"/>
<path d="M2 70.5 L83 35.5 L83 49.5 L2 84.5Z" fill="url(#sg)"/></svg>
<div class="a" style="left:145px;top:293.5px;width:81px;height:0;border-top:0.8px dashed #1a1f24"></div>
<div class="a" style="left:227px;top:63px;width:388px;height:254px;background:#0e6dc6;"></div>
<div class="a" style="left:227px;top:63px;width:0;height:253px;border-left:1px dotted #0a3a70"></div>
<div class="a" style="left:229.5px;top:67.5px;width:219px;height:13px;background:#0b5eb6;"></div>
<div class="a" style="left:230px;top:67.5px;width:31.3px;height:13.2px;background:#5c98d6;"></div>
<div class="a" style="left:230px;top:67.5px;width:31.3px;height:13.2px;border:0.8px dotted #8cbaea"></div>
<div class="a" style="left:228.5px;top:80.7px;width:386px;height:0.9px;background:#3e8ad8;"></div>
<span class="t" style="left:236.10px;top:73.08px;font-size:5.1px;color:#e6eef8;transform:scaleX(0.762);transform-origin:0 0;">Dashboard</span>
<span class="t" style="left:267.00px;top:73.08px;font-size:5.1px;color:#e6eef8;transform:scaleX(0.907);transform-origin:0 0;">Accounts</span>
<span class="t" style="left:302.00px;top:73.08px;font-size:5.1px;color:#e6eef8;transform:scaleX(0.864);transform-origin:0 0;">Leads</span>
<span class="t" style="left:333.75px;top:73.08px;font-size:5.1px;color:#e6eef8;transform:scaleX(0.824);transform-origin:0 0;">Sales</span>
<span class="t" style="left:359.25px;top:73.08px;font-size:5.1px;color:#e6eef8;transform:scaleX(0.983);transform-origin:0 0;">Marketing</span>
<span class="t" style="left:391.75px;top:73.08px;font-size:5.1px;color:#e6eef8;transform:scaleX(0.919);transform-origin:0 0;">Calendar</span>
<span class="t" style="left:426.75px;top:73.08px;font-size:5.1px;color:#e6eef8;transform:scaleX(0.864);transform-origin:0 0;">Users</span>
<div class="a" style="left:613px;top:81px;width:1px;height:235px;background:#5a9ee0;"></div>
<div class="a" style="left:227px;top:315px;width:388px;height:1px;background:#5a9ee0;"></div>
<div class="a" style="left:241px;top:83.2px;width:43.6px;height:28.3px;border:0.9px dashed #1a3050"></div>
<div class="a" style="left:251.9px;top:87px;width:9.6px;height:12.6px;background:#f4f4f4;"></div>
<div class="a" style="left:264.1px;top:87px;width:9.3px;height:7px;background:#f4f4f4;"></div>
<div class="a" style="left:251.9px;top:101px;width:9.6px;height:7px;background:#f4f4f4;"></div>
<div class="a" style="left:264.1px;top:95.4px;width:9.3px;height:12.6px;background:#f4f4f4;"></div>
<span class="t" style="left:286.40px;top:91.50px;font-size:14.3px;color:#ffffff;font-weight:bold;transform:scaleX(0.897);transform-origin:0 0;">Dashboard</span>
<div class="a" style="left:242px;top:115px;width:116.5px;height:77px;border-left:1px solid #2c7fd4;border-top:1px solid #2c7fd4;border-right:0.8px dotted #0a58aa;border-bottom:0.8px dotted #0a58aa;"></div>
<span class="t" style="left:286.60px;top:126.20px;font-size:13px;color:#ffffff;font-weight:bold;transform:scaleX(1.021);transform-origin:0 0;">New</span>
<span class="t" style="left:283.00px;top:170.90px;font-size:13px;color:#ffffff;font-weight:bold;transform:scaleX(0.918);transform-origin:0 0;">Leads</span>
<div class="a" style="left:340.00px;top:116.00px;width:18.6px;height:19.6px;border:0.8px dashed #0b2a4a"></div>
<div class="a" style="left:341.0px;top:118.2px;width:6.8px;height:8px;background:#f4f4f4;"></div>
<div class="a" style="left:349.4px;top:118.2px;width:6.8px;height:5px;background:#f4f4f4;"></div>
<div class="a" style="left:341.0px;top:128px;width:6.8px;height:5px;background:#f4f4f4;"></div>
<div class="a" style="left:349.4px;top:125px;width:6.8px;height:8px;background:#f4f4f4;"></div>
<div class="a" style="left:361px;top:115px;width:117px;height:77px;border-left:1px solid #2c7fd4;border-top:1px solid #2c7fd4;border-right:0.8px dotted #0a58aa;border-bottom:0.8px dotted #0a58aa;"></div>
<span class="t" style="left:400.25px;top:126.20px;font-size:13px;color:#ffffff;font-weight:bold;transform:scaleX(0.986);transform-origin:0 0;">Active</span>
<span class="t" style="left:402.25px;top:170.90px;font-size:13px;color:#ffffff;font-weight:bold;transform:scaleX(0.918);transform-origin:0 0;">Leads</span>
<div class="a" style="left:459.50px;top:116.00px;width:18.6px;height:19.6px;border:0.8px dashed #0b2a4a"></div>
<div class="a" style="left:460.5px;top:118.2px;width:6.8px;height:8px;background:#f4f4f4;"></div>
<div class="a" style="left:468.9px;top:118.2px;width:6.8px;height:5px;background:#f4f4f4;"></div>
<div class="a" style="left:460.5px;top:128px;width:6.8px;height:5px;background:#f4f4f4;"></div>
<div class="a" style="left:468.9px;top:125px;width:6.8px;height:8px;background:#f4f4f4;"></div>
<div class="a" style="left:480px;top:115px;width:117px;height:77px;border-left:1px solid #2c7fd4;border-top:1px solid #2c7fd4;border-right:0.8px dotted #0a58aa;border-bottom:0.8px dotted #0a58aa;"></div>
<span class="t" style="left:501.85px;top:124.20px;font-size:13px;color:#ffffff;font-weight:bold;transform:scaleX(0.838);transform-origin:0 0;">Proposal Sent</span>
<span class="t" style="left:521.25px;top:170.90px;font-size:13px;color:#ffffff;font-weight:bold;transform:scaleX(0.918);transform-origin:0 0;">Leads</span>
<div class="a" style="left:578.50px;top:116.00px;width:18.6px;height:19.6px;border:0.8px dashed #0b2a4a"></div>
<div class="a" style="left:579.5px;top:118.2px;width:6.8px;height:8px;background:#f4f4f4;"></div>
<div class="a" style="left:587.9px;top:118.2px;width:6.8px;height:5px;background:#f4f4f4;"></div>
<div class="a" style="left:579.5px;top:128px;width:6.8px;height:5px;background:#f4f4f4;"></div>
<div class="a" style="left:587.9px;top:125px;width:6.8px;height:8px;background:#f4f4f4;"></div>
<div class="a" style="left:242px;top:194px;width:116.5px;height:77px;border-left:1px solid #2c7fd4;border-top:1px solid #2c7fd4;border-right:0.8px dotted #0a58aa;border-bottom:0.8px dotted #0a58aa;"></div>
<span class="t" style="left:280.25px;top:205.20px;font-size:13px;color:#ffffff;font-weight:bold;transform:scaleX(0.923);transform-origin:0 0;">Closed</span>
<span class="t" style="left:283.00px;top:249.90px;font-size:13px;color:#ffffff;font-weight:bold;transform:scaleX(0.918);transform-origin:0 0;">Leads</span>
<div class="a" style="left:340.00px;top:195.00px;width:18.6px;height:19.6px;border:0.8px dashed #0b2a4a"></div>
<div class="a" style="left:341.0px;top:197.2px;width:6.8px;height:8px;background:#f4f4f4;"></div>
<div class="a" style="left:349.4px;top:197.2px;width:6.8px;height:5px;background:#f4f4f4;"></div>
<div class="a" style="left:341.0px;top:207px;width:6.8px;height:5px;background:#f4f4f4;"></div>
<div class="a" style="left:349.4px;top:204px;width:6.8px;height:8px;background:#f4f4f4;"></div>
<div class="a" style="left:361px;top:194px;width:117px;height:77px;border-left:1px solid #2c7fd4;border-top:1px solid #2c7fd4;border-right:0.8px dotted #0a58aa;border-bottom:0.8px dotted #0a58aa;"></div>
<span class="t" style="left:395.50px;top:205.20px;font-size:13px;color:#ffffff;font-weight:bold;">Inactive</span>
<span class="t" style="left:402.25px;top:249.90px;font-size:13px;color:#ffffff;font-weight:bold;transform:scaleX(0.918);transform-origin:0 0;">Leads</span>
<div class="a" style="left:459.50px;top:195.00px;width:18.6px;height:19.6px;border:0.8px dashed #0b2a4a"></div>
<div class="a" style="left:460.5px;top:197.2px;width:6.8px;height:8px;background:#f4f4f4;"></div>
<div class="a" style="left:468.9px;top:197.2px;width:6.8px;height:5px;background:#f4f4f4;"></div>
<div class="a" style="left:460.5px;top:207px;width:6.8px;height:5px;background:#f4f4f4;"></div>
<div class="a" style="left:468.9px;top:204px;width:6.8px;height:8px;background:#f4f4f4;"></div>
<div class="a" style="left:480px;top:194px;width:117px;height:77px;border-left:1px solid #2c7fd4;border-top:1px solid #2c7fd4;border-right:0.8px dotted #0a58aa;border-bottom:0.8px dotted #0a58aa;"></div>
<span class="t" style="left:521.75px;top:205.20px;font-size:13px;color:#ffffff;font-weight:bold;transform:scaleX(1.113);transform-origin:0 0;">Total</span>
<span class="t" style="left:521.25px;top:249.90px;font-size:13px;color:#ffffff;font-weight:bold;transform:scaleX(0.918);transform-origin:0 0;">Leads</span>
<div class="a" style="left:578.50px;top:195.00px;width:18.6px;height:19.6px;border:0.8px dashed #0b2a4a"></div>
<div class="a" style="left:579.5px;top:197.2px;width:6.8px;height:8px;background:#f4f4f4;"></div>
<div class="a" style="left:587.9px;top:197.2px;width:6.8px;height:5px;background:#f4f4f4;"></div>
<div class="a" style="left:579.5px;top:207px;width:6.8px;height:5px;background:#f4f4f4;"></div>
<div class="a" style="left:587.9px;top:204px;width:6.8px;height:8px;background:#f4f4f4;"></div>
<div class="a" style="left:612.75px;top:414px;width:40px;height:22.6px;background:#37414a;border:0.6px solid #767676;"></div>
<div class="a" style="left:612.75px;top:414px;width:27.4px;height:14.9px;background:#2d2e32;border:0.6px solid #8a8a8a;"></div>
<span class="t" style="left:590.00px;top:439.06px;font-size:5.6px;color:#d8dce0;transform:scaleX(0.822);transform-origin:0 0;">Code</span>
<div class="a" style="left:604.3px;top:436.6px;width:24.2px;height:9.3px;background:#2d2e32;"></div>
<span class="t" style="left:608.00px;top:439.06px;font-size:5.6px;color:#3d8ee0;transform:scaleX(0.918);transform-origin:0 0;">Design</span>
<span class="t" style="left:632.00px;top:439.06px;font-size:5.6px;color:#d8dce0;transform:scaleX(0.890);transform-origin:0 0;">History</span>
<span class="t" style="left:657.90px;top:43.34px;font-size:6.8px;color:#d8dde2;transform:scaleX(0.960);transform-origin:0 0;">Windows10CRMDemo.dproj - Projects</span>
<svg class="a" style="left:779px;top:43.5px" width="5" height="7"><circle cx="2.5" cy="2.2" r="1.3" fill="#b8bcc0"/><path d="M2.5 3.3 V6" stroke="#b8bcc0" stroke-width="0.5"/></svg>
<svg class="a" style="left:787.5px;top:44px" width="6" height="6"><path d="M0.8 0.8 L4.6 4.6 M4.6 0.8 L0.8 4.6" stroke="#b8bcc0" stroke-width="0.55"/></svg>
<div class="a" style="left:656px;top:52px;width:140px;height:11px;background:#353d45;"></div>
<svg class="a" style="left:660px;top:54.5px" width="8" height="8"><rect x="0.5" y="0.5" width="5.5" height="6" fill="none" stroke="#5a7a9a" stroke-width="0.8"/><rect x="0.5" y="0.5" width="5.5" height="1.2" fill="#3a80c8"/><circle cx="5" cy="5.5" r="1.6" fill="#d03030"/></svg>
<svg class="a" style="left:679px;top:54.5px" width="8" height="8"><rect x="0.5" y="0.5" width="6" height="6" fill="#27303a" stroke="#5a7a9a" stroke-width="0.8"/><rect x="0.5" y="0.5" width="6" height="1.2" fill="#3a80c8"/><path d="M2 5 L5 2.5" stroke="#3a80c8" stroke-width="0.8"/></svg>
<svg class="a" style="left:693px;top:54.5px" width="8" height="8"><rect x="0.5" y="0.5" width="6" height="6" fill="#27303a" stroke="#5a7a9a" stroke-width="0.8"/><rect x="0.5" y="0.5" width="6" height="1.2" fill="#3a80c8"/><rect x="3.5" y="4.2" width="3" height="2.3" fill="#d03030"/></svg>
<svg class="a" style="left:704px;top:54.5px" width="8" height="8"><path d="M5.8 2.2 A2.8 2.8 0 1 0 6.2 4.5" stroke="#6a8aa8" stroke-width="0.9" fill="none"/><path d="M4.5 0.8 L6.2 2.4 L4.2 3" stroke="#6a8aa8" stroke-width="0.8" fill="none"/></svg>
<svg class="a" style="left:715px;top:54.5px" width="8" height="8"><rect x="0.5" y="0.5" width="5" height="6" fill="#27303a" stroke="#5a7a9a" stroke-width="0.8"/><rect x="0.5" y="0.5" width="5" height="1.2" fill="#3a80c8"/><rect x="2.5" y="3.5" width="3.5" height="3" fill="#d8dce0"/></svg>
<svg class="a" style="left:726px;top:54.5px" width="8" height="8"><rect x="0.3" y="0.3" width="6" height="6.2" fill="#e8eaec"/><circle cx="3.5" cy="3.6" r="1.6" fill="none" stroke="#3a6aa0" stroke-width="0.8"/></svg>
<svg class="a" style="left:745px;top:54px" width="8" height="8"><circle cx="3.5" cy="3.7" r="2.8" fill="none" stroke="#3a80c8" stroke-width="0.9"/><path d="M3.5 0.9 A2.8 2.8 0 0 1 6.3 3.7" stroke="#e04a30" stroke-width="0.9" fill="none"/></svg>
<svg class="a" style="left:671.5px;top:56.5px" width="5" height="3"><path d="M0.3 0.3 L2.3 2.3 L4.3 0.3" stroke="#8a9098" stroke-width="0.7" fill="none"/></svg>
<svg class="a" style="left:736.5px;top:56.5px" width="5" height="3"><path d="M0.3 0.3 L2.3 2.3 L4.3 0.3" stroke="#8a9098" stroke-width="0.7" fill="none"/></svg>
<svg class="a" style="left:756.5px;top:56.5px" width="5" height="3"><path d="M0.3 0.3 L2.3 2.3 L4.3 0.3" stroke="#8a9098" stroke-width="0.7" fill="none"/></svg>
<svg class="a" style="left:776.5px;top:56.5px" width="5" height="3"><path d="M0.3 0.3 L2.3 2.3 L4.3 0.3" stroke="#8a9098" stroke-width="0.7" fill="none"/></svg>
<div class="a" style="left:765px;top:57.3px;width:1.4px;height:1.4px;background:#3d8ee0;border-radius:50%"></div>
<div class="a" style="left:767.5px;top:57.3px;width:1.4px;height:1.4px;background:#3d8ee0;border-radius:50%"></div>
<div class="a" style="left:770px;top:57.3px;width:1.4px;height:1.4px;background:#3d8ee0;border-radius:50%"></div>
<svg class="a" style="left:657px;top:63.5px" width="8" height="8"><rect x="0.5" y="0.5" width="4.5" height="4.5" fill="none" stroke="#5a8ac8" stroke-width="0.8"/><rect x="2.3" y="2.3" width="4.5" height="4.5" fill="#27303a" stroke="#5a8ac8" stroke-width="0.8"/></svg>
<span class="t" style="left:665.00px;top:64.96px;font-size:5.6px;color:#e0e2e4;transform:scaleX(0.887);transform-origin:0 0;">ProjectGroup1</span>
<svg class="a" style="left:658px;top:74.5px" width="5" height="4"><path d="M0.5 0.8 L2.5 3 L4.5 0.8" stroke="#a8b0b8" stroke-width="0.7" fill="none"/></svg>
<svg class="a" style="left:665px;top:72.8px" width="7" height="7"><rect x="0.5" y="0.5" width="5.5" height="5.8" fill="#1e2630" stroke="#4a8ad0" stroke-width="0.9"/><rect x="0.5" y="0.5" width="5.5" height="1.2" fill="#4a8ad0"/></svg>
<span class="t" style="left:672.00px;top:73.66px;font-size:5.6px;color:#e8eaec;font-weight:bold;transform:scaleX(0.887);transform-origin:0 0;">Windows10CRMDemo.exe</span>
<div class="a" style="left:656px;top:121.9px;width:140px;height:8.2px;background:#35495c;"></div>
<svg class="a" style="left:664.5px;top:82.60px" width="5" height="6"><path d="M0.6 0 L3.4 2.6 L0.6 5.2" stroke="#8e9296" stroke-width="0.65" fill="none"/></svg>
<svg class="a" style="left:670.5px;top:80.9px" width="8" height="8"><rect x="0" y="0" width="3" height="3" fill="#3a80c8"/><circle cx="4.5" cy="4.5" r="2" fill="none" stroke="#9aa4ae" stroke-width="1.1" stroke-dasharray="1 0.6"/></svg>
<span class="t" style="left:679.00px;top:82.36px;font-size:5.6px;color:#e0e2e4;transform:scaleX(0.891);transform-origin:0 0;">Build Configurations (Debug)</span>
<svg class="a" style="left:664.5px;top:90.80px" width="5" height="6"><path d="M0.6 0 L3.4 2.6 L0.6 5.2" stroke="#8e9296" stroke-width="0.65" fill="none"/></svg>
<svg class="a" style="left:670.5px;top:89.3px" width="8" height="8"><circle cx="3.3" cy="3.5" r="2.8" fill="none" stroke="#d04030" stroke-width="0.9"/><path d="M3.3 0.7 A2.8 2.8 0 0 1 6.1 3.5" stroke="#3a80c8" stroke-width="0.9" fill="none"/></svg>
<span class="t" style="left:679.00px;top:90.56px;font-size:5.6px;color:#e0e2e4;transform:scaleX(0.890);transform-origin:0 0;">Target Platforms (Windows 32-bit)</span>
<svg class="a" style="left:664.5px;top:99.20px" width="5" height="6"><path d="M0.6 0 L3.4 2.6 L0.6 5.2" stroke="#8e9296" stroke-width="0.65" fill="none"/></svg>
<svg class="a" style="left:670.5px;top:98px" width="7" height="7"><path d="M0 0 H4 L5.8 1.8 V6.2 H0Z" fill="#eceef0"/><rect x="0.8" y="2.2" width="1.6" height="1.6" fill="#2b2c30"/><rect x="2.5" y="4" width="1.6" height="1.2" fill="#6a7078"/></svg>
<span class="t" style="left:679.00px;top:98.96px;font-size:5.6px;color:#e0e2e4;transform:scaleX(0.879);transform-origin:0 0;">uDataMod.pas</span>
<svg class="a" style="left:664.5px;top:107.60px" width="5" height="6"><path d="M0.6 0 L3.4 2.6 L0.6 5.2" stroke="#8e9296" stroke-width="0.65" fill="none"/></svg>
<svg class="a" style="left:670.5px;top:106.4px" width="7" height="7"><path d="M0 0 H4 L5.8 1.8 V6.2 H0Z" fill="#eceef0"/><rect x="0.8" y="2.2" width="1.6" height="1.6" fill="#2b2c30"/><rect x="2.5" y="4" width="1.6" height="1.2" fill="#6a7078"/></svg>
<span class="t" style="left:679.00px;top:107.36px;font-size:5.6px;color:#e0e2e4;transform:scaleX(0.856);transform-origin:0 0;">uDraftProposal.pas</span>
<svg class="a" style="left:664.5px;top:115.90px" width="5" height="6"><path d="M0.6 0 L3.4 2.6 L0.6 5.2" stroke="#8e9296" stroke-width="0.65" fill="none"/></svg>
<svg class="a" style="left:670.5px;top:114.7px" width="7" height="7"><path d="M0 0 H4 L5.8 1.8 V6.2 H0Z" fill="#eceef0"/><rect x="0.8" y="2.2" width="1.6" height="1.6" fill="#2b2c30"/><rect x="2.5" y="4" width="1.6" height="1.2" fill="#6a7078"/></svg>
<span class="t" style="left:679.00px;top:115.66px;font-size:5.6px;color:#e0e2e4;transform:scaleX(0.829);transform-origin:0 0;">uLeads.pas</span>
<svg class="a" style="left:664.5px;top:124.10px" width="5" height="6"><path d="M0.6 0 L3.4 2.6 L0.6 5.2" stroke="#8e9296" stroke-width="0.65" fill="none"/></svg>
<svg class="a" style="left:670.5px;top:122.9px" width="7" height="7"><path d="M0 0 H4 L5.8 1.8 V6.2 H0Z" fill="#eceef0"/><rect x="0.8" y="2.2" width="1.6" height="1.6" fill="#2b2c30"/><rect x="2.5" y="4" width="1.6" height="1.2" fill="#6a7078"/></svg>
<span class="t" style="left:679.00px;top:123.86px;font-size:5.6px;color:#e0e2e4;transform:scaleX(0.849);transform-origin:0 0;">uMainForm.pas</span>
<svg class="a" style="left:664.5px;top:132.30px" width="5" height="6"><path d="M0.6 0 L3.4 2.6 L0.6 5.2" stroke="#8e9296" stroke-width="0.65" fill="none"/></svg>
<svg class="a" style="left:670.5px;top:131.1px" width="7" height="7"><path d="M0 0 H4 L5.8 1.8 V6.2 H0Z" fill="#eceef0"/><rect x="0.8" y="2.2" width="1.6" height="1.6" fill="#2b2c30"/><rect x="2.5" y="4" width="1.6" height="1.2" fill="#6a7078"/></svg>
<span class="t" style="left:679.00px;top:132.06px;font-size:5.6px;color:#e0e2e4;transform:scaleX(0.867);transform-origin:0 0;">uProposal.pas</span>
<span class="t" style="left:660.00px;top:192.86px;font-size:5.6px;color:#d0d4d8;transform:scaleX(0.863);transform-origin:0 0;">CodeInsight: Done</span>
<span class="t" style="left:660.00px;top:202.76px;font-size:5.6px;color:#d0d4d8;transform:scaleX(0.900);transform-origin:0 0;">C:\Users\Public\Documents\Embarcadero\Studio\22.0\Sam...</span>
<div class="a" style="left:656px;top:210px;width:37.5px;height:10px;background:#2b2c30;"></div>
<span class="t" style="left:660.00px;top:212.86px;font-size:5.6px;color:#3d8ee0;font-weight:bold;transform:scaleX(0.867);transform-origin:0 0;">Windows1...</span>
<span class="t" style="left:696.00px;top:212.86px;font-size:5.6px;color:#d0d4d8;transform:scaleX(0.902);transform-origin:0 0;">Model View</span>
<div class="a" style="left:727px;top:211.5px;width:0.7px;height:7px;background:#6a7078;"></div>
<span class="t" style="left:729.00px;top:212.86px;font-size:5.6px;color:#d0d4d8;transform:scaleX(0.877);transform-origin:0 0;">Data Explorer</span>
<div class="a" style="left:762px;top:211.5px;width:0.7px;height:7px;background:#6a7078;"></div>
<span class="t" style="left:764.00px;top:212.86px;font-size:5.6px;color:#d0d4d8;transform:scaleX(0.990);transform-origin:0 0;">Multi-Devic...</span>
<span class="t" style="left:658.00px;top:228.24px;font-size:6.8px;color:#d8dde2;transform:scaleX(0.921);transform-origin:0 0;">Palette</span>
<svg class="a" style="left:779px;top:227.5px" width="5" height="7"><circle cx="2.5" cy="2.2" r="1.3" fill="#b8bcc0"/><path d="M2.5 3.3 V6" stroke="#b8bcc0" stroke-width="0.5"/></svg>
<svg class="a" style="left:787.5px;top:228px" width="6" height="6"><path d="M0.8 0.8 L4.6 4.6 M4.6 0.8 L0.8 4.6" stroke="#b8bcc0" stroke-width="0.55"/></svg>
<div class="a" style="left:656px;top:237px;width:62px;height:11px;background:#37414a;"></div>
<div class="a" style="left:659px;top:239.5px;width:5px;height:6px;background:#e8e8e8;"></div>
<svg class="a" style="left:668px;top:241px" width="5" height="3"><path d="M0.3 0.3 L2.3 2.3 L4.3 0.3" stroke="#8a9098" stroke-width="0.7" fill="none"/></svg>
<svg class="a" style="left:675px;top:239.5px" width="7" height="7"><path d="M0.5 0.5 L6 2.5 L3.5 3.5 L2.5 6Z" stroke="#8a9098" stroke-width="0.8" fill="none"/></svg>
<div class="a" style="left:718px;top:247px;width:72px;height:0;border-top:0.8px dotted #3e444a"></div>
<svg class="a" style="left:787px;top:239.5px" width="7" height="7"><circle cx="4" cy="3" r="2" stroke="#3d8ee0" stroke-width="0.9" fill="none"/><path d="M2.6 4.4 L0.8 6.2" stroke="#3d8ee0" stroke-width="1"/></svg>
<svg class="a" style="left:659.2px;top:251.10px" width="5" height="6"><path d="M0.6 0 L3.4 2.6 L0.6 5.2" stroke="#8e9296" stroke-width="0.65" fill="none"/></svg>
<span class="t" style="left:666.00px;top:250.96px;font-size:5.6px;color:#e0e2e4;transform:scaleX(0.870);transform-origin:0 0;">Standard</span>
<svg class="a" style="left:659.2px;top:259.43px" width="5" height="6"><path d="M0.6 0 L3.4 2.6 L0.6 5.2" stroke="#8e9296" stroke-width="0.65" fill="none"/></svg>
<span class="t" style="left:666.00px;top:259.29px;font-size:5.6px;color:#e0e2e4;transform:scaleX(0.870);transform-origin:0 0;">Additional</span>
<svg class="a" style="left:659.2px;top:267.76px" width="5" height="6"><path d="M0.6 0 L3.4 2.6 L0.6 5.2" stroke="#8e9296" stroke-width="0.65" fill="none"/></svg>
<span class="t" style="left:666.00px;top:267.62px;font-size:5.6px;color:#e0e2e4;transform:scaleX(0.870);transform-origin:0 0;">System</span>
<svg class="a" style="left:659.2px;top:276.09px" width="5" height="6"><path d="M0.6 0 L3.4 2.6 L0.6 5.2" stroke="#8e9296" stroke-width="0.65" fill="none"/></svg>
<span class="t" style="left:666.00px;top:275.95px;font-size:5.6px;color:#e0e2e4;transform:scaleX(0.870);transform-origin:0 0;">Dialogs</span>
<svg class="a" style="left:659.2px;top:284.42px" width="5" height="6"><path d="M0.6 0 L3.4 2.6 L0.6 5.2" stroke="#8e9296" stroke-width="0.65" fill="none"/></svg>
<span class="t" style="left:666.00px;top:284.28px;font-size:5.6px;color:#e0e2e4;transform:scaleX(0.870);transform-origin:0 0;">Xml</span>
<svg class="a" style="left:659.2px;top:292.75px" width="5" height="6"><path d="M0.6 0 L3.4 2.6 L0.6 5.2" stroke="#8e9296" stroke-width="0.65" fill="none"/></svg>
<span class="t" style="left:666.00px;top:292.61px;font-size:5.6px;color:#e0e2e4;transform:scaleX(0.870);transform-origin:0 0;">LiveBindings</span>
<svg class="a" style="left:659.2px;top:301.08px" width="5" height="6"><path d="M0.6 0 L3.4 2.6 L0.6 5.2" stroke="#8e9296" stroke-width="0.65" fill="none"/></svg>
<span class="t" style="left:666.00px;top:300.94px;font-size:5.6px;color:#e0e2e4;transform:scaleX(0.870);transform-origin:0 0;">LiveBindings Misc</span>
<svg class="a" style="left:659.2px;top:309.41px" width="5" height="6"><path d="M0.6 0 L3.4 2.6 L0.6 5.2" stroke="#8e9296" stroke-width="0.65" fill="none"/></svg>
<span class="t" style="left:666.00px;top:309.27px;font-size:5.6px;color:#e0e2e4;transform:scaleX(0.870);transform-origin:0 0;">Net</span>
<svg class="a" style="left:659.2px;top:317.74px" width="5" height="6"><path d="M0.6 0 L3.4 2.6 L0.6 5.2" stroke="#8e9296" stroke-width="0.65" fill="none"/></svg>
<span class="t" style="left:666.00px;top:317.60px;font-size:5.6px;color:#e0e2e4;transform:scaleX(0.870);transform-origin:0 0;">Tethering</span>
<svg class="a" style="left:659.2px;top:326.07px" width="5" height="6"><path d="M0.6 0 L3.4 2.6 L0.6 5.2" stroke="#8e9296" stroke-width="0.65" fill="none"/></svg>
<span class="t" style="left:666.00px;top:325.93px;font-size:5.6px;color:#e0e2e4;transform:scaleX(0.870);transform-origin:0 0;">Vista Dialogs</span>
<svg class="a" style="left:659.2px;top:334.40px" width="5" height="6"><path d="M0.6 0 L3.4 2.6 L0.6 5.2" stroke="#8e9296" stroke-width="0.65" fill="none"/></svg>
<span class="t" style="left:666.00px;top:334.26px;font-size:5.6px;color:#e0e2e4;transform:scaleX(0.870);transform-origin:0 0;">Win32</span>
<svg class="a" style="left:659.2px;top:342.73px" width="5" height="6"><path d="M0.6 0 L3.4 2.6 L0.6 5.2" stroke="#8e9296" stroke-width="0.65" fill="none"/></svg>
<span class="t" style="left:666.00px;top:342.59px;font-size:5.6px;color:#e0e2e4;transform:scaleX(0.870);transform-origin:0 0;">Data Access</span>
<svg class="a" style="left:659.2px;top:351.06px" width="5" height="6"><path d="M0.6 0 L3.4 2.6 L0.6 5.2" stroke="#8e9296" stroke-width="0.65" fill="none"/></svg>
<span class="t" style="left:666.00px;top:350.92px;font-size:5.6px;color:#e0e2e4;transform:scaleX(0.870);transform-origin:0 0;">Sensors</span>
<svg class="a" style="left:659.2px;top:359.39px" width="5" height="6"><path d="M0.6 0 L3.4 2.6 L0.6 5.2" stroke="#8e9296" stroke-width="0.65" fill="none"/></svg>
<span class="t" style="left:666.00px;top:359.25px;font-size:5.6px;color:#e0e2e4;transform:scaleX(0.870);transform-origin:0 0;">Windows 10</span>
<svg class="a" style="left:659.2px;top:367.72px" width="5" height="6"><path d="M0.6 0 L3.4 2.6 L0.6 5.2" stroke="#8e9296" stroke-width="0.65" fill="none"/></svg>
<span class="t" style="left:666.00px;top:367.58px;font-size:5.6px;color:#e0e2e4;transform:scaleX(0.870);transform-origin:0 0;">Analytics</span>
<svg class="a" style="left:659.2px;top:376.05px" width="5" height="6"><path d="M0.6 0 L3.4 2.6 L0.6 5.2" stroke="#8e9296" stroke-width="0.65" fill="none"/></svg>
<span class="t" style="left:666.00px;top:375.91px;font-size:5.6px;color:#e0e2e4;transform:scaleX(0.870);transform-origin:0 0;">Win 3.1</span>
<svg class="a" style="left:659.2px;top:384.38px" width="5" height="6"><path d="M0.6 0 L3.4 2.6 L0.6 5.2" stroke="#8e9296" stroke-width="0.65" fill="none"/></svg>
<span class="t" style="left:666.00px;top:384.24px;font-size:5.6px;color:#e0e2e4;transform:scaleX(0.870);transform-origin:0 0;">Data Controls</span>
<svg class="a" style="left:659.2px;top:392.71px" width="5" height="6"><path d="M0.6 0 L3.4 2.6 L0.6 5.2" stroke="#8e9296" stroke-width="0.65" fill="none"/></svg>
<span class="t" style="left:666.00px;top:392.57px;font-size:5.6px;color:#e0e2e4;transform:scaleX(0.870);transform-origin:0 0;">Internet</span>
<svg class="a" style="left:659.2px;top:401.04px" width="5" height="6"><path d="M0.6 0 L3.4 2.6 L0.6 5.2" stroke="#8e9296" stroke-width="0.65" fill="none"/></svg>
<span class="t" style="left:666.00px;top:400.90px;font-size:5.6px;color:#e0e2e4;transform:scaleX(0.870);transform-origin:0 0;">Samples</span>
<svg class="a" style="left:659.2px;top:409.37px" width="5" height="6"><path d="M0.6 0 L3.4 2.6 L0.6 5.2" stroke="#8e9296" stroke-width="0.65" fill="none"/></svg>
<span class="t" style="left:666.00px;top:409.23px;font-size:5.6px;color:#e0e2e4;transform:scaleX(0.870);transform-origin:0 0;">Touch</span>
<svg class="a" style="left:659.2px;top:417.70px" width="5" height="6"><path d="M0.6 0 L3.4 2.6 L0.6 5.2" stroke="#8e9296" stroke-width="0.65" fill="none"/></svg>
<span class="t" style="left:666.00px;top:417.56px;font-size:5.6px;color:#e0e2e4;transform:scaleX(0.870);transform-origin:0 0;">Gestures</span>
<svg class="a" style="left:659.2px;top:426.03px" width="5" height="6"><path d="M0.6 0 L3.4 2.6 L0.6 5.2" stroke="#8e9296" stroke-width="0.65" fill="none"/></svg>
<span class="t" style="left:666.00px;top:425.89px;font-size:5.6px;color:#e0e2e4;transform:scaleX(0.870);transform-origin:0 0;">TeeChart Std</span>
<svg class="a" style="left:659.2px;top:434.36px" width="5" height="6"><path d="M0.6 0 L3.4 2.6 L0.6 5.2" stroke="#8e9296" stroke-width="0.65" fill="none"/></svg>
<span class="t" style="left:666.00px;top:434.22px;font-size:5.6px;color:#e0e2e4;transform:scaleX(0.870);transform-origin:0 0;">dbExpress</span>
<svg class="a" style="left:659.2px;top:442.69px" width="5" height="6"><path d="M0.6 0 L3.4 2.6 L0.6 5.2" stroke="#8e9296" stroke-width="0.65" fill="none"/></svg>
<span class="t" style="left:666.00px;top:442.55px;font-size:5.6px;color:#e0e2e4;transform:scaleX(0.870);transform-origin:0 0;">REST Client</span>
<div class="a" style="left:789.6px;top:248px;width:6.9px;height:101px;background:#37414a;"></div>
<svg class="a" style="left:791px;top:251px" width="5" height="4"><path d="M0.5 3 L2.5 0.8 L4.5 3" stroke="#7a8088" stroke-width="0.7" fill="none"/></svg>
<svg class="a" style="left:791px;top:443px" width="5" height="4"><path d="M0.5 0.8 L2.5 3 L4.5 0.8" stroke="#8890a0" stroke-width="0.7" fill="none"/></svg>
</body></html>
